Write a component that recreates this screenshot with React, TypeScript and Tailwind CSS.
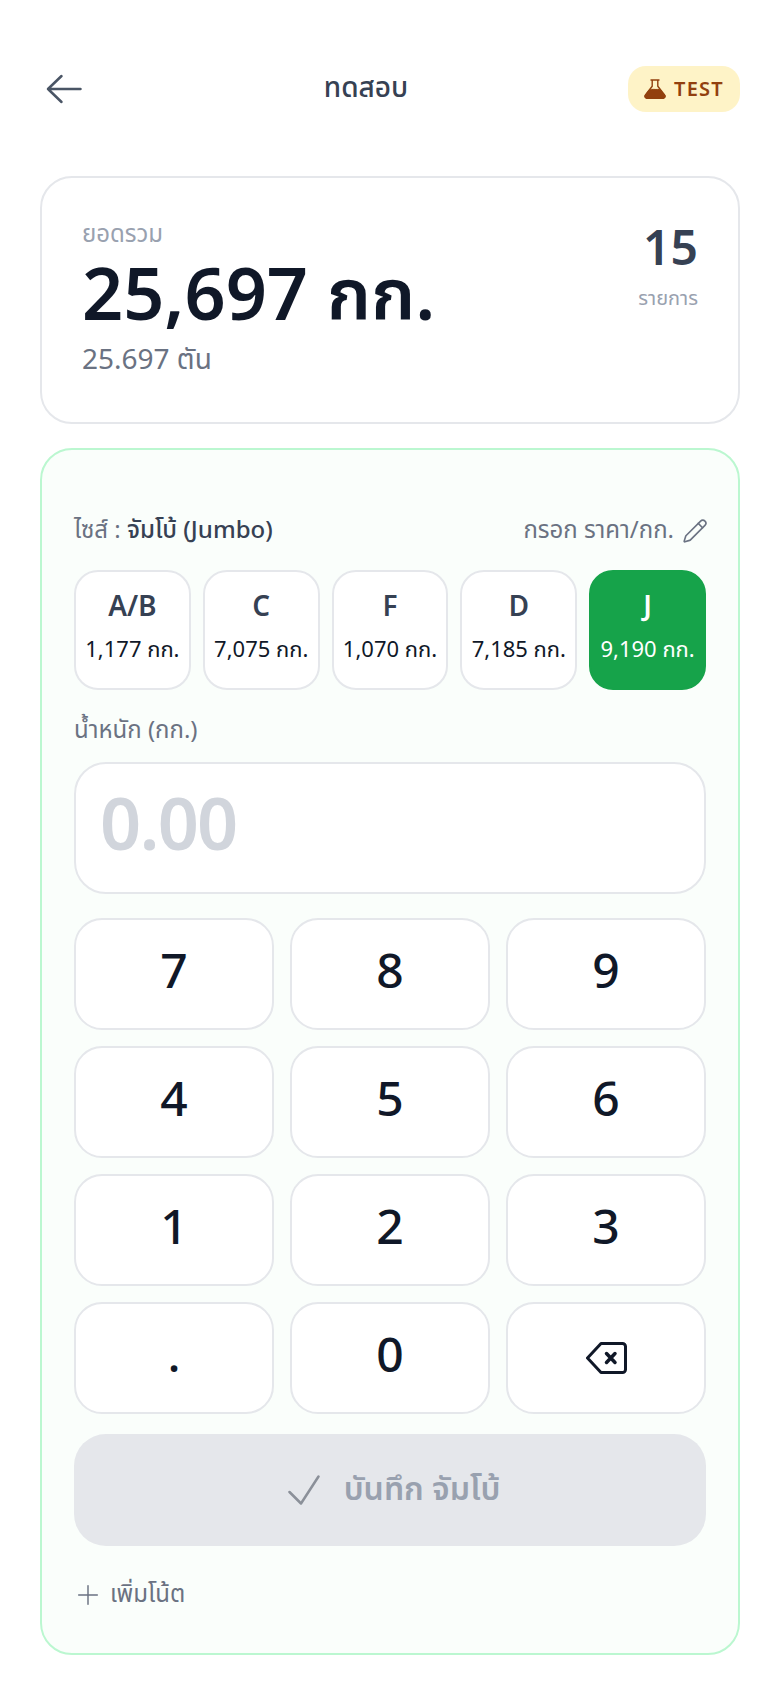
import { Pencil, Plus } from "lucide-react";

const sizes = [
  { code: "A/B", weight: "1,177 กก." },
  { code: "C", weight: "7,075 กก." },
  { code: "F", weight: "1,070 กก." },
  { code: "D", weight: "7,185 กก." },
  { code: "J", weight: "9,190 กก.", active: true },
];

const keys = ["7", "8", "9", "4", "5", "6", "1", "2", "3", ".", "0"];

function App() {
  return (
    <div className="min-h-[1688px] bg-white px-10 pt-[66px] font-['Noto_Sans_Thai',sans-serif]">
      <header className="flex h-[46px] items-center justify-between">
        <button className="flex w-[64px] items-center pl-[6px] text-gray-600">
          <svg viewBox="0 0 36 30" className="h-[30px] w-[36px]" fill="none" stroke="currentColor" strokeWidth="2.5" strokeLinecap="round" strokeLinejoin="round">
            <path d="M34.5 15H2M15.5 2 2 15l13.5 13" />
          </svg>
        </button>
        <h1 className="text-[28px] font-medium text-gray-700">ทดสอบ</h1>
        <div className="flex h-[46px] w-[112px] items-center justify-center gap-2 rounded-[18px] bg-[#fef3c7] text-[20px] font-semibold tracking-[1.2px] text-[#92400e]">
          <svg viewBox="0 0 22 20" className="h-5 w-[22px]" fill="none" stroke="#92400e" strokeWidth="1.4" strokeLinecap="round" strokeLinejoin="round">
            <path d="M7 1h8M8.2 1v6.2L1.4 16a2 2 0 0 0 1.6 3.3h16a2 2 0 0 0 1.6-3.3L13.8 7.2V1" />
            <path d="M5.4 11c3-1.4 6-.2 8.4-.6 1.2-.2 2 .2 2.6.6l4.2 5.2a2 2 0 0 1-1.6 3.1H3a2 2 0 0 1-1.6-3.1z" fill="#92400e" strokeWidth="1" />
          </svg>
          <span className="pt-[2px]">TEST</span>
        </div>
      </header>

      <section className="mt-16 flex h-[248px] items-start justify-between rounded-[32px] border-2 border-gray-200 px-10 pt-[41px]">
        <div>
          <p className="text-[24px] leading-8 text-gray-400">ยอดรวม</p>
          <p className="mt-[6px] text-[72px] leading-[82px] font-semibold text-gray-900">25,697 กก.</p>
          <p className="mt-1 text-[28px] leading-9 text-gray-500">25.697 ตัน</p>
        </div>
        <div className="mt-[4px] text-right">
          <p className="text-[48px] leading-[56px] font-semibold text-gray-700">15</p>
          <p className="mt-[6px] text-[20px] leading-7 text-gray-400">รายการ</p>
        </div>
      </section>

      <section className="mt-6 h-[1207px] rounded-[32px] border-2 border-[#bbf7d0] bg-[#fafefb] px-8 pt-[63px]">
        <div className="flex h-9 items-center justify-between">
          <p className="text-[24px] leading-9 text-gray-500">
            ไซส์ : <span className="font-medium text-gray-700">จัมโบ้ (Jumbo)</span>
          </p>
          <button className="-mr-[2px] flex items-center gap-2 text-[24px] leading-9 text-gray-500">
            กรอก ราคา/กก.
            <Pencil className="h-[26px] w-[26px]" strokeWidth={1.5} />
          </button>
        </div>

        <div className="mt-[21px] flex gap-3">
          {sizes.map((s) => (
            <button
              key={s.code}
              className={
                s.active
                  ? "flex h-[120px] flex-auto flex-col items-center justify-center gap-2.5 rounded-3xl border-2 border-[#16a34a] bg-[#16a34a] pb-1 text-white"
                  : "flex h-[120px] flex-auto flex-col items-center justify-center gap-2.5 rounded-3xl border-2 border-gray-200 bg-white pb-1"
              }
            >
              <span className={s.active ? "text-[28px] leading-9 font-semibold" : "text-[28px] leading-9 font-semibold text-gray-700"}>
                {s.code}
              </span>
              <span className={s.active ? "text-[22px] leading-[30px]" : "text-[22px] leading-[30px] text-gray-900"}>{s.weight}</span>
            </button>
          ))}
        </div>

        <p className="mt-[23px] text-[24px] leading-9 text-gray-500">น้ำหนัก (กก.)</p>
        <div className="mt-[13px] flex h-[132px] items-center rounded-[32px] border-2 border-gray-200 bg-white px-6 text-[72px] font-semibold tracking-[-1.8px] text-gray-300">
          0.00
        </div>

        <div className="mt-6 grid grid-cols-3 gap-4">
          {keys.map((k) => (
            <button
              key={k}
              className="flex h-[112px] items-center justify-center rounded-[28px] border-2 border-gray-200 bg-white text-[48px] font-medium text-gray-900"
            >
              {k}
            </button>
          ))}
          <button className="flex h-[112px] items-center justify-center rounded-[28px] border-2 border-gray-200 bg-white text-gray-900">
            <svg viewBox="0 0 41 32" className="h-8 w-[41px]" fill="none" stroke="currentColor" strokeWidth="3" strokeLinecap="round" strokeLinejoin="round">
              <path d="M15 1.5h21.5a3 3 0 0 1 3 3v23a3 3 0 0 1-3 3H15L1.5 16z" />
              <path d="M20.5 11.5l8.5 9M29 11.5l-8.5 9" strokeWidth="3.5" />
            </svg>
          </button>
        </div>

        <button className="mt-5 flex h-[112px] w-full items-center justify-center gap-6 rounded-[32px] bg-gray-200 pl-2 text-[32px] font-semibold text-gray-400">
          <svg viewBox="0 0 32 30" className="h-[30px] w-8" fill="none" stroke="#8b9099" strokeWidth="2.5" strokeLinecap="round" strokeLinejoin="round">
            <path d="M1.5 17 13 28.5 30.5 1.5" />
          </svg>
          บันทึก จัมโบ้
        </button>

        <button className="mt-[31px] -ml-[2px] flex h-9 items-center gap-1.5 text-[24px] leading-9 text-gray-500">
          <Plus className="h-8 w-8" strokeWidth={1.1} />
          เพิ่มโน้ต
        </button>
      </section>
    </div>
  );
}

export default App;
